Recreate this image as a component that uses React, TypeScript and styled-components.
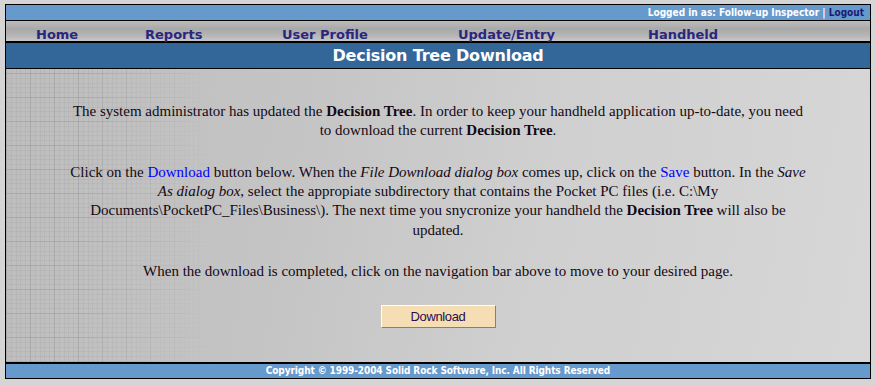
import React from 'react';
import styled, { createGlobalStyle } from 'styled-components';

const GlobalStyle = createGlobalStyle`
  html, body {
    margin: 0;
    padding: 0;
    background: #d5d5d5;
  }
  body {
    padding: 4px 0 0 5px;
  }
`;

const Frame = styled.div`
  width: 866px;
  box-sizing: border-box;
  border: 1px solid #000;
  background: #d5d5d5;
`;

const TopBar = styled.div`
  height: 15px;
  background: #6699cc;
  border-bottom: 1px solid #000;
  display: flex;
  justify-content: flex-end;
  align-items: center;
  padding-right: 6px;
  font-family: 'DejaVu Sans Condensed', 'DejaVu Sans', sans-serif;
  font-stretch: condensed;
  font-weight: bold;
  font-size: 10px;
  line-height: 15px;
  color: #fff;
  white-space: pre;
`;

const LogoutLink = styled.a`
  color: #1c1a72;
  text-decoration: none;
`;

const NavBar = styled.nav`
  height: 22px;
  box-sizing: border-box;
  padding: 4px 0 0 30px;
  border-bottom: 2px solid #000;
  background: linear-gradient(#bcbcbc 0%, #a9a9a9 40%, #b4b4b4 70%, #c6c6c6 100%);
  display: grid;
  grid-template-columns: 109px 137px 176px 190px 1fr;
  align-items: start;
`;

const NavLink = styled.a`
  font-family: 'DejaVu Sans', Verdana, sans-serif;
  font-weight: bold;
  font-size: 13px;
  line-height: 15px;
  color: #2a2680;
  text-decoration: none;
  white-space: nowrap;
`;

const TitleBar = styled.h1`
  margin: 0;
  height: 25px;
  background: #336699;
  border-bottom: 1px solid #000;
  font-family: 'DejaVu Sans', Verdana, sans-serif;
  font-weight: bold;
  font-size: 16px;
  letter-spacing: -0.2px;
  line-height: 25px;
  color: #fff;
  text-align: center;
`;

const Content = styled.main`
  position: relative;
  height: 293px;
  box-sizing: border-box;
  padding-top: 33px;
  background: linear-gradient(100deg, #bdbdbd 0%, #c5c5c5 35%, #cfcfcf 60%, #d7d7d7 100%);
  display: flex;
  flex-direction: column;
  align-items: center;

  &::before {
    content: '';
    position: absolute;
    inset: 0;
    pointer-events: none;
    background-image:
      repeating-linear-gradient(90deg, rgba(120, 120, 130, 0.2) 0 1px, transparent 1px 24px),
      repeating-linear-gradient(0deg, rgba(120, 120, 130, 0.2) 0 1px, transparent 1px 24px),
      repeating-linear-gradient(90deg, rgba(120, 120, 130, 0.09) 0 1px, transparent 1px 4.8px),
      repeating-linear-gradient(0deg, rgba(120, 120, 130, 0.09) 0 1px, transparent 1px 4.8px);
    -webkit-mask-image: linear-gradient(90deg, #000 0%, #000 80px, rgba(0, 0, 0, 0.5) 150px, transparent 210px);
    mask-image: linear-gradient(90deg, #000 0%, #000 80px, rgba(0, 0, 0, 0.5) 150px, transparent 210px);
  }
`;

const Text = styled.p`
  position: relative;
  width: 790px;
  margin: 0 0 21.7px;
  font-family: 'Liberation Serif', 'Times New Roman', serif;
  font-size: 15px;
  line-height: 19.4px;
  color: #140814;
  text-align: center;
`;

const BlueLink = styled.a`
  color: #0000ff;
  text-decoration: none;
`;

const DownloadButton = styled.button`
  position: relative;
  margin-top: 2px;
  width: 115px;
  height: 23px;
  background: #f5deb3;
  border: 1px solid;
  border-color: #ffffff #808080 #808080 #ffffff;
  font-family: 'Liberation Sans', Arial, sans-serif;
  font-size: 13px;
  letter-spacing: -0.35px;
  color: #2c0c4c;
  padding: 0;
  cursor: pointer;
`;

const Footer = styled.footer`
  height: 14px;
  background: #6699cc;
  border-top: 2px solid #000;
  font-family: 'DejaVu Sans Condensed', 'DejaVu Sans', sans-serif;
  font-stretch: condensed;
  font-weight: bold;
  font-size: 10px;
  letter-spacing: -0.1px;
  line-height: 14px;
  color: #fff;
  text-align: center;
`;

const navItems = ['Home', 'Reports', 'User Profile', 'Update/Entry', 'Handheld'];

export default function App() {
  return (
    <>
      <GlobalStyle />
      <Frame>
        <TopBar>
          Logged in as: Follow-up Inspector | <LogoutLink href="#">Logout</LogoutLink>
        </TopBar>
        <NavBar>
          {navItems.map((item) => (
            <div key={item}>
              <NavLink href="#">{item}</NavLink>
            </div>
          ))}
        </NavBar>
        <TitleBar>Decision Tree Download</TitleBar>
        <Content>
          <Text>
            The system administrator has updated the <b>Decision Tree</b>. In order to keep your
            handheld application up-to-date, you need
            <br />
            to download the current <b>Decision Tree</b>.
          </Text>
          <Text>
            Click on the <BlueLink href="#">Download</BlueLink> button below. When the{' '}
            <i>File Download dialog box</i> comes up, click on the <BlueLink href="#">Save</BlueLink>{' '}
            button. In the <i>Save</i>
            <br />
            <i>As dialog box</i>, select the appropiate subdirectory that contains the Pocket PC files
            (i.e. C:\My
            <br />
            Documents\PocketPC_Files\Business\). The next time you snycronize your handheld the{' '}
            <b>Decision Tree</b> will also be
            <br />
            updated.
          </Text>
          <Text>
            When the download is completed, click on the navigation bar above to move to your desired
            page.
          </Text>
          <DownloadButton type="button">Download</DownloadButton>
        </Content>
        <Footer>Copyright © 1999-2004 Solid Rock Software, Inc. All Rights Reserved</Footer>
      </Frame>
    </>
  );
}
